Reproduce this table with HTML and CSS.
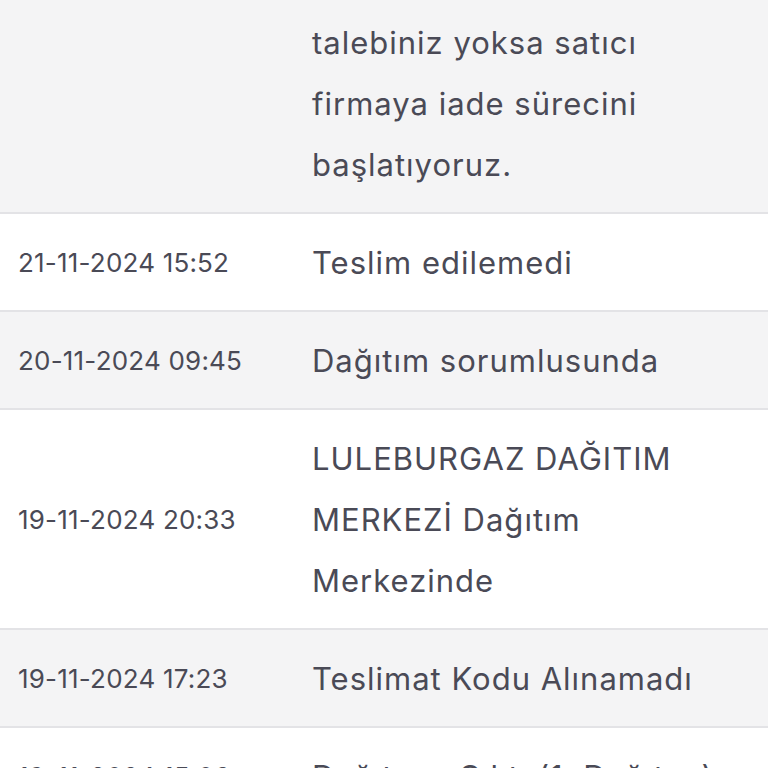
FILE: index.html
```html
<!DOCTYPE html>
<html lang="tr">
<head>
  <meta charset="UTF-8">
  <meta name="viewport" content="width=device-width, initial-scale=1.0">
  <title>Kargo Takip</title>
  <link rel="stylesheet" href="styles.css">
</head>
<body>
  <div class="history">
    <div class="row first">
      <div class="date"></div>
      <div class="status">talebiniz yoksa satıcı<br>firmaya iade sürecini<br>başlatıyoruz.</div>
    </div>
    <div class="row">
      <div class="date">21-11-2024 15:52</div>
      <div class="status">Teslim edilemedi</div>
    </div>
    <div class="row">
      <div class="date">20-11-2024 09:45</div>
      <div class="status">Dağıtım sorumlusunda</div>
    </div>
    <div class="row">
      <div class="date">19-11-2024 20:33</div>
      <div class="status">LULEBURGAZ DAĞITIM<br>MERKEZİ Dağıtım<br>Merkezinde</div>
    </div>
    <div class="row">
      <div class="date">19-11-2024 17:23</div>
      <div class="status">Teslimat Kodu Alınamadı</div>
    </div>
    <div class="row">
      <div class="date">19-11-2024 15:06</div>
      <div class="status">Dağıtıma Çıktı (1. Dağıtım)</div>
    </div>
  </div>
</body>
</html>
```

FILE: styles.css
```css
body {
  margin: 0;
  padding: 0;
  font-family: 'Inter', 'Open Sans', sans-serif;
  color: #4a4a56;
  background-color: #fff;
  height: 768px;
  overflow: hidden;
}

.history {
  margin-top: -6px;
}

.row {
  display: grid;
  grid-template-columns: 294px 1fr;
  align-items: center;
  padding: 18px 18px 17px;
  border-bottom: 2px solid #e3e3e6;
}

/* striped rows */
.row:nth-child(odd) {
  background-color: #f4f4f5;
}

.row:nth-child(even) {
  background-color: #fff;
}

.date {
  font-size: 26px;
  letter-spacing: 0.2px;
}

.status {
  font-size: 31px;
  line-height: 61px;
  letter-spacing: 1px;
}
```
